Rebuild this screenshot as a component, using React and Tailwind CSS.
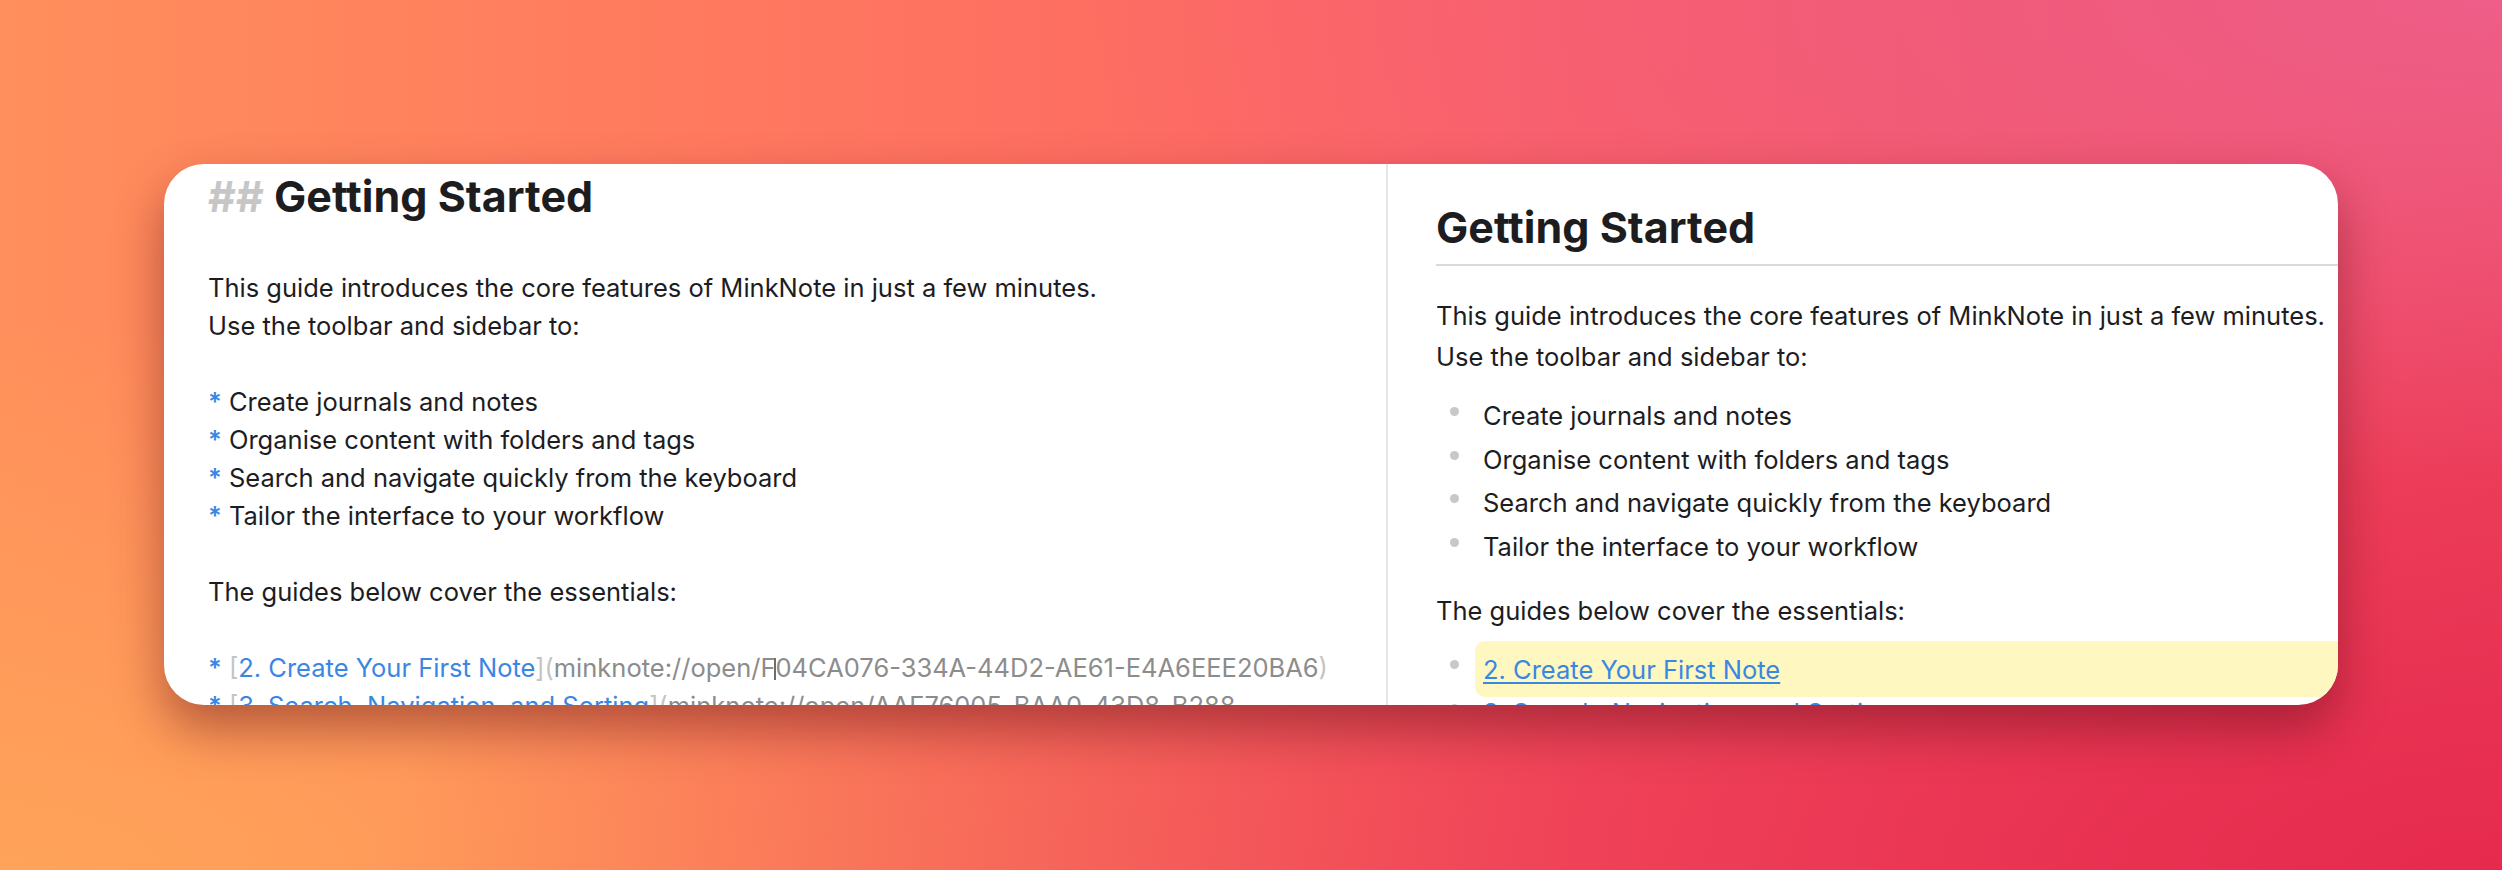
// App.jsx
const blue = "text-[#3a87e3]";

function Bullet({ children }) {
  return (
    <li className="flex leading-[43.6px]">
      <span className="w-[47px] shrink-0">
        <span className="mt-[13px] ml-[14px] block h-[9px] w-[9px] rounded-full bg-[#c8c8c8]" />
      </span>
      <span>{children}</span>
    </li>
  );
}

function SourcePane() {
  return (
    <div className="w-[1222px] shrink-0 overflow-hidden pl-[44px] text-[25.5px] leading-[38px] text-[#1d1d1f]">
      <h2 className="pb-[2px] text-[43px] font-bold leading-[65px] text-[#1d1d1f]">
        <span className="text-[#c6c6c6]">##</span> Getting Started
      </h2>
      <div className="h-[38px]" />
      <div>This guide introduces the core features of MinkNote in just a few minutes.</div>
      <div>Use the toolbar and sidebar to:</div>
      <div className="h-[38px]" />
      {[
        "Create journals and notes",
        "Organise content with folders and tags",
        "Search and navigate quickly from the keyboard",
        "Tailor the interface to your workflow",
      ].map((t) => (
        <div key={t}>
          <span className={`font-semibold ${blue}`}>*</span> {t}
        </div>
      ))}
      <div className="h-[38px]" />
      <div>The guides below cover the essentials:</div>
      <div className="h-[38px]" />
      <div className="whitespace-nowrap">
        <span className={`font-semibold ${blue}`}>*</span>{" "}
        <span className="text-[#c4c4c4]">[</span>
        <span className={blue}>2. Create Your First Note</span>
        <span className="text-[#c4c4c4]">](</span>
        <span className="text-[#8c8c8c]">
          minknote://open/F
          <span className="-mx-px inline-block h-[22px] w-[2px] bg-[#6e6e6e] align-[-3px]" />
          04CA076-334A-44D2-AE61-E4A6EEE20BA6
        </span>
        <span className="text-[#c4c4c4]">)</span>
      </div>
      <div className="whitespace-nowrap">
        <span className={`font-semibold ${blue}`}>*</span>{" "}
        <span className="text-[#c4c4c4]">[</span>
        <span className={blue}>3. Search, Navigation, and Sorting</span>
        <span className="text-[#c4c4c4]">](</span>
        <span className="text-[#8c8c8c]">minknote://open/AAF76005-BAA0-43D8-B288</span>
      </div>
    </div>
  );
}

function PreviewPane() {
  return (
    <div className="min-w-0 flex-1 overflow-hidden pl-[48px] pt-[39px] text-[25.5px] text-[#1d1d1f]">
      <div className="w-[1100px]">
        <h2 className="border-b-2 border-[#dadada] pb-[13px] text-[43px] font-bold leading-[48px] text-[#1d1d1f]">
          Getting Started
        </h2>
        <p className="mt-[29px] leading-[41px]">
          This guide introduces the core features of MinkNote in just a few minutes.
          <br />
          Use the toolbar and sidebar to:
        </p>
        <ul className="mt-[17px]">
          <Bullet>Create journals and notes</Bullet>
          <Bullet>Organise content with folders and tags</Bullet>
          <Bullet>Search and navigate quickly from the keyboard</Bullet>
          <Bullet>Tailor the interface to your workflow</Bullet>
        </ul>
        <p className="mt-[22px] leading-[41px]">The guides below cover the essentials:</p>
        <ul className="mt-[16px]">
          <li className="flex h-[43.6px] leading-[43.6px]">
            <span className="w-[39px] shrink-0">
              <span className="mt-[13px] ml-[14px] block h-[9px] w-[9px] rounded-full bg-[#c8c8c8]" />
            </span>
            <span className="-my-[6px] h-[56px] flex-1 rounded-l-[10px] bg-[#fef7c0] pl-[8px] pt-[1px] leading-[56px]">
              <a className={`underline underline-offset-[3px] ${blue}`}>2. Create Your First Note</a>
            </span>
          </li>
          <Bullet>
            <a className={`underline underline-offset-[3px] ${blue}`}>3. Search, Navigation, and Sorting</a>
          </Bullet>
        </ul>
      </div>
    </div>
  );
}

export default function App() {
  return (
    <div
      className="h-[870px] w-[2502px] overflow-hidden bg-[radial-gradient(ellipse_at_100%_0%,#ee5e88_0%,transparent_40%),radial-gradient(ellipse_at_100%_100%,#e62a4e_0%,transparent_60%),radial-gradient(ellipse_at_0%_100%,#ffa359_0%,transparent_45%),linear-gradient(90deg,#ff8f5c_0%,#ff785f_30%,#fc6265_60%,#f04a62_100%)] pl-[164px] pt-[164px]"
      style={{ fontFamily: "Inter, 'Noto Sans', sans-serif" }}
    >
      <div className="flex h-[541px] w-[2174px] overflow-hidden rounded-[40px] bg-white shadow-[0_24px_50px_rgba(90,10,20,0.45)]">
        <SourcePane />
        <div className="w-[2px] shrink-0 bg-[#e6e6ec]" />
        <PreviewPane />
      </div>
    </div>
  );
}
